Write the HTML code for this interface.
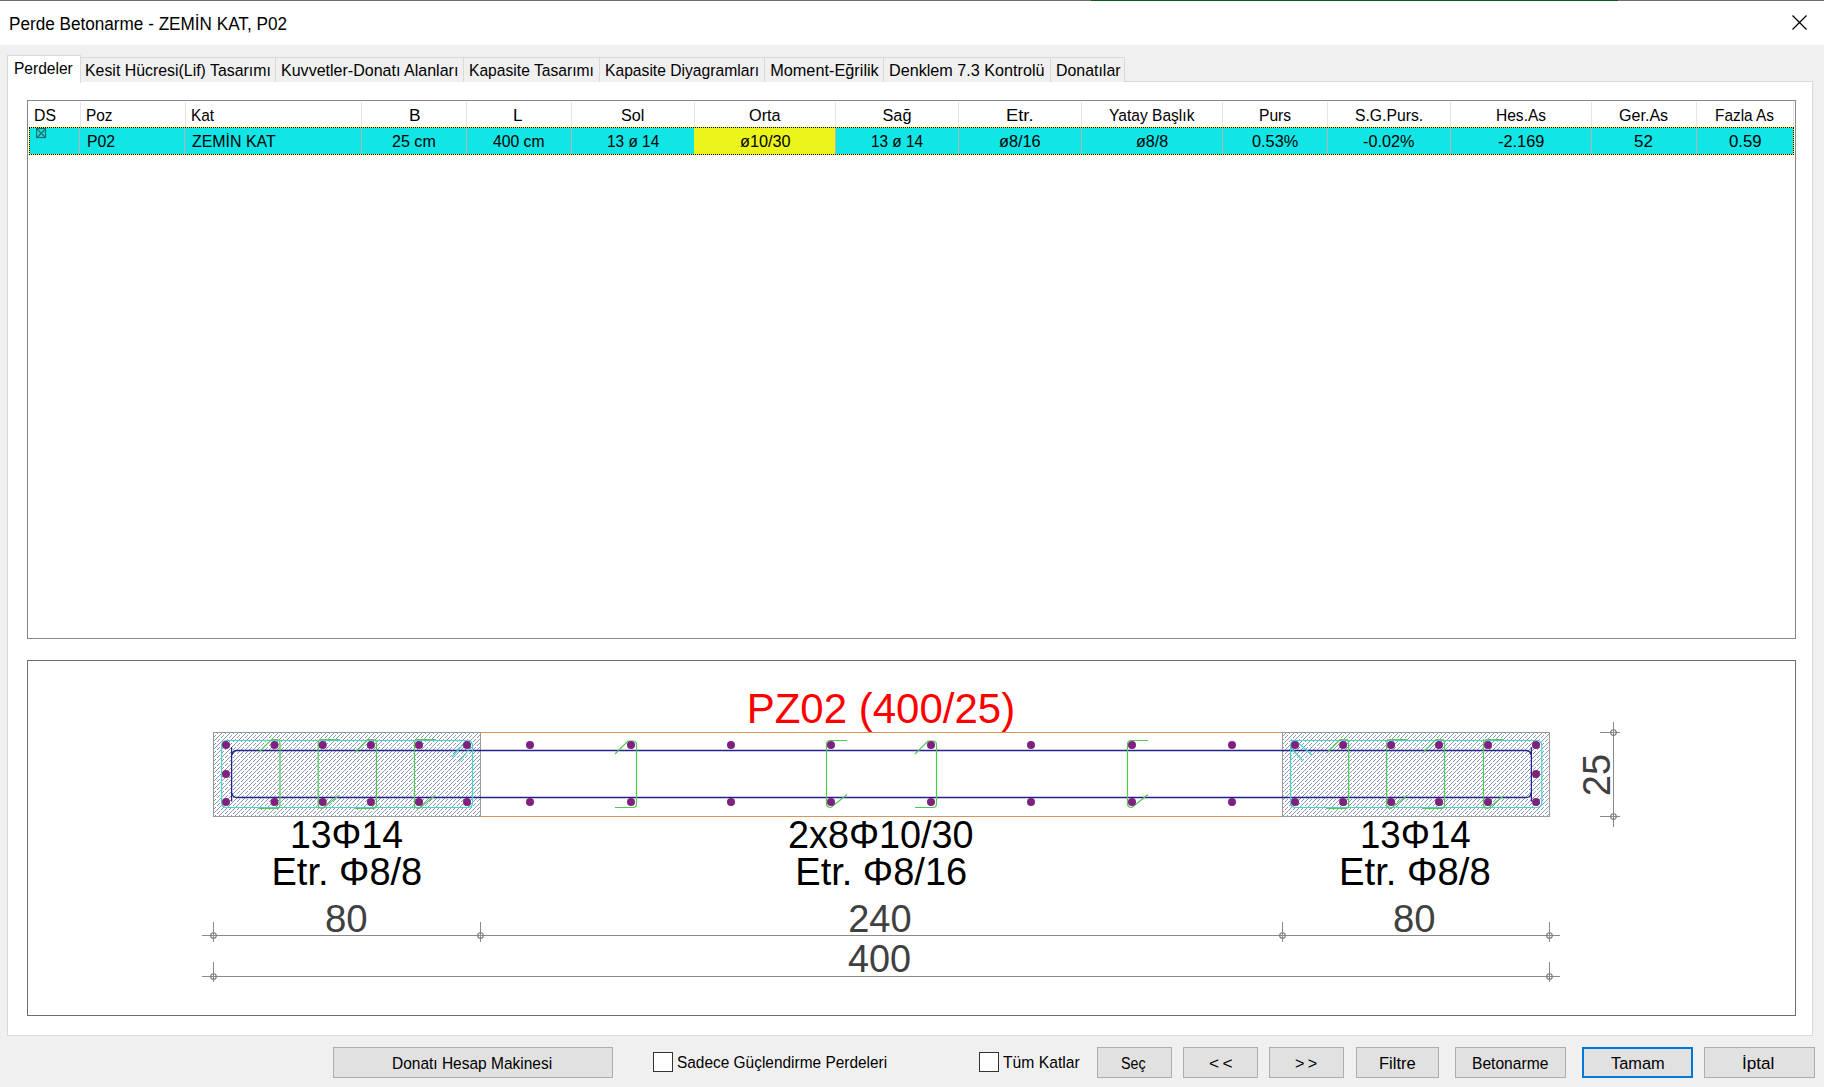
<!DOCTYPE html>
<html><head><meta charset="utf-8">
<style>
html,body{margin:0;padding:0}
body{width:1824px;height:1087px;overflow:hidden;background:#f0f0f0;position:relative;font-family:"Liberation Sans",sans-serif}
.a{position:absolute;box-sizing:border-box}
.t{position:absolute;white-space:nowrap;line-height:1;font-family:"Liberation Sans",sans-serif;transform-origin:0 0}
.tab{position:absolute;box-sizing:border-box;border:1px solid #d9d9d9;border-bottom:none;background:#f0f0f0;top:57px;height:25px}
.hs{position:absolute;top:102px;height:25px;width:1px;background:#e5e5e5}
.ds{position:absolute;top:128px;height:26px;width:1px;background:#b4b4b4}
.btn{position:absolute;box-sizing:border-box;border:1px solid #adadad;background:#e1e1e1;top:1047px;height:31px}
.cb{position:absolute;box-sizing:border-box;border:1px solid #333;background:#fff;top:1052px;width:20px;height:20px}
</style></head><body>
<!-- title bar -->
<div class="a" style="left:0;top:0;width:1824px;height:45px;background:#fff"></div>
<div class="a" style="left:0;top:0;width:1824px;height:1px;background:#6e6e6e"></div>
<div class="a" style="left:1091px;top:0;width:527px;height:1px;background:#0b5a22"></div>
<svg class="a" style="left:0;top:0" width="1824" height="45"><path d="M1792.5 15.5 L1806.5 29.5 M1806.5 15.5 L1792.5 29.5" stroke="#000" stroke-width="1.25" fill="none"/></svg>
<!-- tab panel -->
<div class="a" style="left:7px;top:81px;width:1806px;height:955px;background:#fff;border:1px solid #d9d9d9"></div>
<div class="tab" style="left:80px;width:196px"></div>
<div class="tab" style="left:275px;width:189px"></div>
<div class="tab" style="left:463px;width:137px"></div>
<div class="tab" style="left:599px;width:166px"></div>
<div class="tab" style="left:764px;width:120px"></div>
<div class="tab" style="left:883px;width:168px"></div>
<div class="tab" style="left:1050px;width:75px"></div>
<div class="a" style="left:7px;top:55px;width:74px;height:28px;background:#fff;border:1px solid #d9d9d9;border-bottom:none"></div>
<!-- table -->
<div class="a" style="left:27px;top:100px;width:1769px;height:539px;background:#fff;border:1px solid #828790"></div>
<div class="hs" style="left:80px"></div><div class="hs" style="left:185px"></div><div class="hs" style="left:361px"></div>
<div class="hs" style="left:466px"></div><div class="hs" style="left:571px"></div><div class="hs" style="left:694px"></div>
<div class="hs" style="left:835px"></div><div class="hs" style="left:958px"></div><div class="hs" style="left:1081px"></div>
<div class="hs" style="left:1222px"></div><div class="hs" style="left:1327px"></div><div class="hs" style="left:1450px"></div>
<div class="hs" style="left:1591px"></div><div class="hs" style="left:1696px"></div><div class="hs" style="left:1793px"></div>
<div class="a" style="left:29px;top:127px;width:1765px;height:28px;background:#11e5e5"></div>
<div class="a" style="left:694px;top:127px;width:141px;height:28px;background:#ebf51c"></div>
<div class="ds" style="left:79px"></div><div class="ds" style="left:184px"></div><div class="ds" style="left:361px"></div>
<div class="ds" style="left:466px"></div><div class="ds" style="left:571px"></div>
<div class="ds" style="left:835px"></div><div class="ds" style="left:958px"></div><div class="ds" style="left:1081px"></div>
<div class="ds" style="left:1222px"></div><div class="ds" style="left:1327px"></div><div class="ds" style="left:1450px"></div>
<div class="ds" style="left:1591px"></div><div class="ds" style="left:1696px"></div>
<!-- focus rect -->
<div class="a" style="left:29px;top:127px;width:1765px;height:28px;border:1px solid #f0f000"></div>
<div class="a" style="left:29px;top:127px;width:1765px;height:28px;border:1px dotted #000"></div>
<svg class="a" style="left:36px;top:128px" width="11" height="11"><rect x="0.5" y="0.5" width="9" height="9" fill="none" stroke="#1f6d6d" stroke-width="1.2"/><path d="M1 1L9.5 9.5M9.5 1L1 9.5" stroke="#1f6d6d" stroke-width="1.2"/></svg>
<!-- drawing box -->
<div class="a" style="left:27px;top:660px;width:1769px;height:356px;background:#fff;border:1px solid #6d6d6d"></div>
<svg class="a" style="left:0;top:0" width="1824" height="1087" shape-rendering="auto"><defs><pattern id="h" patternUnits="userSpaceOnUse" x="0" y="0" width="8" height="8"><path d="M2 0h1v1h-1zM6 0h1v1h-1zM1 1h1v1h-1zM5 1h1v1h-1zM0 2h1v1h-1zM3 3h1v1h-1zM7 3h1v1h-1zM2 4h1v1h-1zM6 4h1v1h-1zM1 5h1v1h-1zM5 5h1v1h-1zM4 6h1v1h-1zM3 7h1v1h-1zM7 7h1v1h-1z" fill="#8698ba"/></pattern></defs>
<rect x="213" y="732" width="268" height="85" fill="#fff"/>
<rect x="213" y="732" width="268" height="85" fill="url(#h)"/>
<rect x="1282" y="732" width="268" height="85" fill="#fff"/>
<rect x="1282" y="732" width="268" height="85" fill="url(#h)"/>
<path d="M481 732.5H1282M481 816.5H1282" stroke="#d4965a" stroke-width="1" fill="none"/>
<rect x="213.5" y="732.5" width="267" height="84" fill="none" stroke="#9a9a9a" stroke-width="1"/>
<rect x="1282.5" y="732.5" width="267" height="84" fill="none" stroke="#9a9a9a" stroke-width="1"/>
<path d="M231.6 747.3V801.6M1531.4 747.3V801.6 M232 755 Q232.5 750.5 237 750.5 H1526 Q1530.5 750.5 1531 755 M232 793 Q232.5 797.5 237 797.5 H1526 Q1530.5 797.5 1531 793" stroke="#23238a" stroke-width="1.3" fill="none"/>
<path d="M226.6 740.5H467.5Q472.5 740.5 472.5 745.5V802.5Q472.5 807.5 467.5 807.5H226.6Q221.6 807.5 221.6 802.5V745.5Q221.6 740.5 226.6 740.5Z M466 741 L452 757 M471 747 L459 762 M1290.6 740.5 H1536.8 Q1541.8 740.5 1541.8 745.5 V802.5 Q1541.8 807.5 1536.8 807.5 H1295.6 Q1290.6 807.5 1290.6 802.5 V745.5 Q1290.6 740.5 1295.6 740.5Z M1296 741 L1312 755 M1291 748 L1303 761" stroke="#48d2cc" stroke-width="1.2" fill="none"/>
<path d="M258.5 752.5 L271.5 739.5 H276.5 Q280.0 739.5 280.0 743.5 V804.5 Q280.0 808.5 276.5 808.5 H258.5 M354.9 752.5 L367.9 739.5 H372.9 Q376.4 739.5 376.4 743.5 V804.5 Q376.4 808.5 372.9 808.5 H354.9 M1327.1 752.5 L1340.1 739.5 H1345.1 Q1348.6 739.5 1348.6 743.5 V804.5 Q1348.6 808.5 1345.1 808.5 H1327.1 M1423 752.5 L1436 739.5 H1441 Q1444.5 739.5 1444.5 743.5 V804.5 Q1444.5 808.5 1441 808.5 H1423 M338.7 739.5 H321.7 Q318.2 739.5 318.2 743.5 V804.5 Q318.2 808.5 322.7 808.5 L338.7 795.5 M435 739.5 H418 Q414.5 739.5 414.5 743.5 V804.5 Q414.5 808.5 419 808.5 L435 795.5 M1407.1 739.5 H1390.1 Q1386.6 739.5 1386.6 743.5 V804.5 Q1386.6 808.5 1391.1 808.5 L1407.1 795.5 M1504 739.5 H1487 Q1483.5 739.5 1483.5 743.5 V804.5 Q1483.5 808.5 1488 808.5 L1504 795.5 M615 754 L628 741 H633 Q636.5 741 636.5 745 V803.5 Q636.5 807.5 633 807.5 H615 M915 754 L928 741 H933 Q936.5 741 936.5 745 V803.5 Q936.5 807.5 933 807.5 H915 M847 740.5 H830 Q826.5 740.5 826.5 744.5 V803.5 Q826.5 807.5 831 807.5 L847 794.5 M1148 740.5 H1131 Q1127.5 740.5 1127.5 744.5 V803.5 Q1127.5 807.5 1132 807.5 L1148 794.5" stroke="#52c852" stroke-width="1.2" fill="none"/>
<circle cx="226" cy="745" r="4" fill="#80207f"/>
<circle cx="226" cy="802" r="4" fill="#80207f"/>
<circle cx="274.5" cy="745" r="4" fill="#80207f"/>
<circle cx="274.5" cy="802" r="4" fill="#80207f"/>
<circle cx="322.7" cy="745" r="4" fill="#80207f"/>
<circle cx="322.7" cy="802" r="4" fill="#80207f"/>
<circle cx="370.9" cy="745" r="4" fill="#80207f"/>
<circle cx="370.9" cy="802" r="4" fill="#80207f"/>
<circle cx="419" cy="745" r="4" fill="#80207f"/>
<circle cx="419" cy="802" r="4" fill="#80207f"/>
<circle cx="467" cy="745" r="4" fill="#80207f"/>
<circle cx="467" cy="802" r="4" fill="#80207f"/>
<circle cx="530" cy="745" r="4" fill="#80207f"/>
<circle cx="530" cy="802" r="4" fill="#80207f"/>
<circle cx="631" cy="745" r="4" fill="#80207f"/>
<circle cx="631" cy="802" r="4" fill="#80207f"/>
<circle cx="731" cy="745" r="4" fill="#80207f"/>
<circle cx="731" cy="802" r="4" fill="#80207f"/>
<circle cx="831" cy="745" r="4" fill="#80207f"/>
<circle cx="831" cy="802" r="4" fill="#80207f"/>
<circle cx="931" cy="745" r="4" fill="#80207f"/>
<circle cx="931" cy="802" r="4" fill="#80207f"/>
<circle cx="1031" cy="745" r="4" fill="#80207f"/>
<circle cx="1031" cy="802" r="4" fill="#80207f"/>
<circle cx="1132" cy="745" r="4" fill="#80207f"/>
<circle cx="1132" cy="802" r="4" fill="#80207f"/>
<circle cx="1232" cy="745" r="4" fill="#80207f"/>
<circle cx="1232" cy="802" r="4" fill="#80207f"/>
<circle cx="1295" cy="745" r="4" fill="#80207f"/>
<circle cx="1295" cy="802" r="4" fill="#80207f"/>
<circle cx="1343.1" cy="745" r="4" fill="#80207f"/>
<circle cx="1343.1" cy="802" r="4" fill="#80207f"/>
<circle cx="1391.1" cy="745" r="4" fill="#80207f"/>
<circle cx="1391.1" cy="802" r="4" fill="#80207f"/>
<circle cx="1439" cy="745" r="4" fill="#80207f"/>
<circle cx="1439" cy="802" r="4" fill="#80207f"/>
<circle cx="1488" cy="745" r="4" fill="#80207f"/>
<circle cx="1488" cy="802" r="4" fill="#80207f"/>
<circle cx="1536" cy="745" r="4" fill="#80207f"/>
<circle cx="1536" cy="802" r="4" fill="#80207f"/>
<circle cx="226" cy="774" r="4" fill="#80207f"/>
<circle cx="1536" cy="774" r="4" fill="#80207f"/>
<path d="M202 935.5H1560 M202 976.5H1560 M213.5 922V942 M480.5 922V942 M1282.5 922V942 M1549.5 922V942 M213.5 962V982 M1549.5 962V982 M1613.5 722V827 M1600 732.5H1620 M1600 816.5H1620" stroke="#8a8a8a" stroke-width="1" fill="none"/>
<circle cx="213.5" cy="935.5" r="2.8" fill="none" stroke="#777" stroke-width="1.1"/>
<circle cx="480.5" cy="935.5" r="2.8" fill="none" stroke="#777" stroke-width="1.1"/>
<circle cx="1282.5" cy="935.5" r="2.8" fill="none" stroke="#777" stroke-width="1.1"/>
<circle cx="1549.5" cy="935.5" r="2.8" fill="none" stroke="#777" stroke-width="1.1"/>
<circle cx="213.5" cy="976.5" r="2.8" fill="none" stroke="#777" stroke-width="1.1"/>
<circle cx="1549.5" cy="976.5" r="2.8" fill="none" stroke="#777" stroke-width="1.1"/>
<circle cx="1613.5" cy="732.5" r="2.8" fill="none" stroke="#777" stroke-width="1.1"/>
<circle cx="1613.5" cy="816.5" r="2.8" fill="none" stroke="#777" stroke-width="1.1"/>
<text x="0" y="0" transform="translate(1609.9 796.2) rotate(-90)" font-family="Liberation Sans" font-size="38" fill="#404040">25</text></svg>
<!-- buttons -->
<div class="btn" style="left:333px;width:280px"></div>
<div class="cb" style="left:653px"></div>
<div class="cb" style="left:979px"></div>
<div class="btn" style="left:1097px;width:75px"></div>
<div class="btn" style="left:1183px;width:75px"></div>
<div class="btn" style="left:1269px;width:75px"></div>
<div class="btn" style="left:1356px;width:83px"></div>
<div class="btn" style="left:1455px;width:111px"></div>
<div class="btn" style="left:1582px;width:111px;border:2px solid #0078d7"></div>
<div class="btn" style="left:1704px;width:111px"></div>
<div class=t style='left:9.23px;top:16.00px;font-size:17.6px;color:#000;transform:scaleX(0.9746);'>Perde Betonarme - ZEMİN KAT, P02</div>
<div class=t style='left:14.14px;top:59.80px;font-size:16.3px;color:#000;transform:scaleX(0.9550);'>Perdeler</div>
<div class=t style='left:84.62px;top:61.90px;font-size:16.3px;color:#000;transform:scaleX(0.9755);'>Kesit Hücresi(Lif) Tasarımı</div>
<div class=t style='left:281.12px;top:61.90px;font-size:16.3px;color:#000;transform:scaleX(0.9848);'>Kuvvetler-Donatı Alanları</div>
<div class=t style='left:469.24px;top:61.90px;font-size:16.3px;color:#000;transform:scaleX(0.9602);'>Kapasite Tasarımı</div>
<div class=t style='left:605.24px;top:61.90px;font-size:16.3px;color:#000;transform:scaleX(0.9614);'>Kapasite Diyagramları</div>
<div class=t style='left:770.20px;top:61.90px;font-size:16.3px;color:#000;'>Moment-Eğrilik</div>
<div class=t style='left:889.11px;top:61.90px;font-size:16.3px;color:#000;transform:scaleX(0.9935);'>Denklem 7.3 Kontrolü</div>
<div class=t style='left:1056.12px;top:61.90px;font-size:16.3px;color:#000;transform:scaleX(0.9769);'>Donatılar</div>
<div class=t style='left:33.53px;top:107.00px;font-size:16.3px;color:#000;transform:scaleX(0.9714);'>DS</div>
<div class=t style='left:86.15px;top:107.00px;font-size:16.3px;color:#000;transform:scaleX(0.9462);'>Poz</div>
<div class=t style='left:190.95px;top:107.00px;font-size:16.3px;color:#000;transform:scaleX(0.9478);'>Kat</div>
<div class=t style='left:408.73px;top:107.00px;font-size:16.3px;color:#000;transform:scaleX(1.0667);'>B</div>
<div class=t style='left:513.15px;top:107.00px;font-size:16.3px;color:#000;transform:scaleX(1.0500);'>L</div>
<div class=t style='left:620.60px;top:107.00px;font-size:16.3px;color:#000;transform:scaleX(0.9955);'>Sol</div>
<div class=t style='left:749.00px;top:107.00px;font-size:16.3px;color:#000;'>Orta</div>
<div class=t style='left:882.50px;top:107.00px;font-size:16.3px;color:#000;'>Sağ</div>
<div class=t style='left:1006.37px;top:107.00px;font-size:16.3px;color:#000;transform:scaleX(1.1273);'>Etr.</div>
<div class=t style='left:1108.94px;top:107.00px;font-size:16.3px;color:#000;transform:scaleX(0.9568);'>Yatay Başlık</div>
<div class=t style='left:1258.94px;top:107.00px;font-size:16.3px;color:#000;transform:scaleX(0.9594);'>Purs</div>
<div class=t style='left:1354.93px;top:107.00px;font-size:16.3px;color:#000;transform:scaleX(0.9662);'>S.G.Purs.</div>
<div class=t style='left:1496.15px;top:107.00px;font-size:16.3px;color:#000;transform:scaleX(0.9549);'>Hes.As</div>
<div class=t style='left:1619.11px;top:107.00px;font-size:16.3px;color:#000;transform:scaleX(0.9875);'>Ger.As</div>
<div class=t style='left:1715.15px;top:107.00px;font-size:16.3px;color:#000;transform:scaleX(0.9459);'>Fazla As</div>
<div class=t style='left:86.61px;top:133.50px;font-size:16px;color:#000;transform:scaleX(0.9852);'>P02</div>
<div class=t style='left:191.90px;top:133.50px;font-size:16px;color:#000;transform:scaleX(0.9952);'>ZEMİN KAT</div>
<div class=t style='left:392.30px;top:133.50px;font-size:16px;color:#000;transform:scaleX(1.0048);'>25 cm</div>
<div class=t style='left:493.10px;top:133.50px;font-size:16px;color:#000;transform:scaleX(0.9808);'>400 cm</div>
<div class=t style='left:607.24px;top:133.50px;font-size:16px;color:#000;transform:scaleX(0.9623);'>13 ø 14</div>
<div class=t style='left:739.99px;top:133.50px;font-size:16px;color:#000;transform:scaleX(1.0146);'>ø10/30</div>
<div class=t style='left:871.44px;top:133.50px;font-size:16px;color:#000;transform:scaleX(0.9585);'>13 ø 14</div>
<div class=t style='left:998.58px;top:133.50px;font-size:16px;color:#000;transform:scaleX(1.0179);'>ø8/16</div>
<div class=t style='left:1135.89px;top:133.50px;font-size:16px;color:#000;transform:scaleX(1.0067);'>ø8/8</div>
<div class=t style='left:1251.78px;top:133.50px;font-size:16px;color:#000;transform:scaleX(1.0182);'>0.53%</div>
<div class=t style='left:1362.89px;top:133.50px;font-size:16px;color:#000;transform:scaleX(1.0143);'>-0.02%</div>
<div class=t style='left:1497.68px;top:133.50px;font-size:16px;color:#000;transform:scaleX(1.0205);'>-2.169</div>
<div class=t style='left:1634.44px;top:133.50px;font-size:16px;color:#000;transform:scaleX(1.0563);'>52</div>
<div class=t style='left:1728.85px;top:133.50px;font-size:16px;color:#000;transform:scaleX(1.0483);'>0.59</div>
<div class=t style='left:392.35px;top:1055.00px;font-size:16.3px;color:#000;transform:scaleX(0.9512);'>Donatı Hesap Makinesi</div>
<div class=t style='left:1121.42px;top:1055.00px;font-size:16.3px;color:#000;transform:scaleX(0.8778);'>Seç</div>
<div class=t style='left:1208.54px;top:1055.00px;font-size:16.3px;color:#000;transform:scaleX(1.0600);'>&lt;&#8201;&lt;</div>
<div class=t style='left:1294.50px;top:1055.00px;font-size:16.3px;color:#000;transform:scaleX(0.9952);'>&gt;&#8201;&gt;</div>
<div class=t style='left:1379.29px;top:1055.00px;font-size:16.3px;color:#000;transform:scaleX(1.0147);'>Filtre</div>
<div class=t style='left:1471.74px;top:1055.00px;font-size:16.3px;color:#000;transform:scaleX(0.9590);'>Betonarme</div>
<div class=t style='left:1610.60px;top:1055.00px;font-size:16.3px;color:#000;transform:scaleX(1.0058);'>Tamam</div>
<div class=t style='left:1742.25px;top:1055.00px;font-size:16.3px;color:#000;transform:scaleX(1.0517);'>İptal</div>
<div class=t style='left:676.55px;top:1054.00px;font-size:16.3px;color:#000;transform:scaleX(0.9477);'>Sadece Güçlendirme Perdeleri</div>
<div class=t style='left:1003.40px;top:1054.00px;font-size:16.3px;color:#000;transform:scaleX(0.9650);'>Tüm Katlar</div>
<div class=t style='left:746.69px;top:688.10px;font-size:42px;color:#ff0000;'>PZ02 (400/25)</div>
<div class=t style='left:289.85px;top:816.20px;font-size:38px;color:#000;transform:scaleX(0.9838);'>13Φ14</div>
<div class=t style='left:271.50px;top:852.80px;font-size:38px;color:#000;'>Etr. Φ8/8</div>
<div class=t style='left:787.51px;top:816.00px;font-size:38px;color:#000;transform:scaleX(0.9940);'>2x8Φ10/30</div>
<div class=t style='left:795.31px;top:852.80px;font-size:38px;color:#000;'>Etr. Φ8/16</div>
<div class=t style='left:1359.71px;top:816.20px;font-size:38px;color:#000;transform:scaleX(0.9640);'>13Φ14</div>
<div class=t style='left:1338.98px;top:852.80px;font-size:38px;color:#000;transform:scaleX(1.0068);'>Etr. Φ8/8</div>
<div class=t style='left:325.28px;top:899.50px;font-size:38px;color:#404040;transform:scaleX(1.0103);'>80</div>
<div class=t style='left:848.20px;top:899.90px;font-size:38px;color:#404040;'>240</div>
<div class=t style='left:1393.39px;top:899.50px;font-size:38px;color:#404040;transform:scaleX(1.0051);'>80</div>
<div class=t style='left:848.30px;top:939.70px;font-size:38px;color:#404040;transform:scaleX(0.9951);'>400</div>
</body></html>
